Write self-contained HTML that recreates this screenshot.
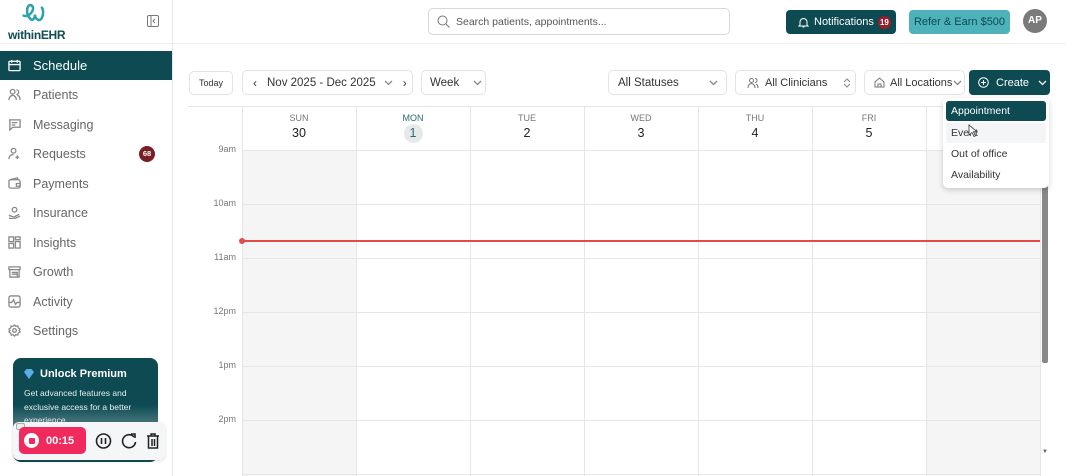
<!DOCTYPE html>
<html><head><meta charset="utf-8"><style>
*{box-sizing:border-box;margin:0;padding:0}
body{width:1066px;height:476px;overflow:hidden;background:#fff;font-family:"Liberation Sans",sans-serif;color:#222;position:relative}
.a{position:absolute}
.nav{position:absolute;left:0;width:172px;height:29px;display:flex;align-items:center;font-size:12.5px;color:#666}
.nav svg{margin:0 12px 0 8px;width:13px;height:13px;stroke:#888;fill:none;stroke-width:1.4}
.box{position:absolute;border:1px solid #e3e3e3;border-radius:5px;background:#fff;font-size:11.5px;color:#333;display:flex;align-items:center;white-space:nowrap}
.chev{width:9px;height:9px;stroke:#888;fill:none;stroke-width:1.3;flex:none}
.dh{position:absolute;top:107px;width:114px;text-align:center}
.dh .d{font-size:9px;color:#777;margin-top:6px}
.dh .n{font-size:12.5px;color:#222;margin-top:3px}
.vl{position:absolute;top:107px;height:369px;width:1px;background:#e6e6e6}
.hl{position:absolute;left:242px;width:798px;height:1px;background:#e6e6e6}
.tl{position:absolute;left:188px;width:48px;text-align:right;font-size:9px;color:#777}
.mi{position:absolute;left:946px;width:100px;height:20px;font-size:10.5px;padding-left:5px;line-height:20px;color:#333}
</style></head><body>
<div class="a" style="left:172px;top:0;width:1px;height:476px;background:#e8e8e8"></div>
<svg class="a" style="left:20px;top:2px" width="30" height="25" viewBox="0 0 26 22"><path d="M3 12 C8 14 14 6 10 3 C6 1 4 10 9 15 C11 17 13 14 13 11 C13 15 17 18 19 14 C21 10 20 6 19 5" stroke="#2aa3ab" stroke-width="2.2" fill="none" stroke-linecap="round"/></svg>
<div class="a" style="left:8px;top:28px;font-size:12px;font-weight:bold;color:#0f4c55;letter-spacing:-0.3px">withinEHR</div>
<svg class="a" style="left:147px;top:15px" width="12" height="12" viewBox="0 0 12 12"><rect x="0.5" y="0.5" width="11" height="11" rx="1.5" stroke="#777" fill="none"/><path d="M4 1v10M8 4l-2 2 2 2" stroke="#777" fill="none"/></svg>
<div class="a" style="left:0;top:43px;width:172px;height:1px;background:#eee"></div>
<div class="nav" style="top:51px;background:#0d4a52;color:#fff;font-size:13px"><svg viewBox="0 0 14 14" style="stroke:#fff"><rect x="1" y="2.5" width="12" height="10" rx="1"/><path d="M1 6h12M4 1v3M10 1v3"/></svg>Schedule</div>
<div class="nav" style="top:80px"><svg viewBox="0 0 14 14"><circle cx="5" cy="4" r="2.5"/><path d="M1 13c0-3 2-5 4-5s4 2 4 5M9 2a2.5 2.5 0 010 5M10 8c2 0 3 2 3 5"/></svg>Patients</div>
<div class="nav" style="top:110px"><svg viewBox="0 0 14 14"><path d="M1 2h12v8H5l-3 3V2zM4 5h6M4 7.5h4"/></svg>Messaging</div>
<div class="nav" style="top:139px"><svg viewBox="0 0 14 14"><circle cx="6" cy="4" r="2.5"/><path d="M1 13c0-3 2-5 5-5M10 9v4M8 11h4"/></svg>Requests<span class="a" style="left:139px;top:7px;width:16px;height:16px;border-radius:8px;background:#7b1d24;color:#fff;font-size:7.5px;text-align:center;line-height:16px;font-weight:bold">68</span></div>
<div class="nav" style="top:169px"><svg viewBox="0 0 14 14"><rect x="1" y="3" width="12" height="9" rx="2"/><path d="M2 3l8-2 1 2M9 7h4v3H9z"/></svg>Payments</div>
<div class="nav" style="top:198px"><svg viewBox="0 0 14 14"><circle cx="7" cy="4" r="2.5"/><path d="M1 10l5 2 6-3M1 13l5 1 7-3"/></svg>Insurance</div>
<div class="nav" style="top:228px"><svg viewBox="0 0 14 14"><rect x="1" y="1" width="5" height="5"/><rect x="8" y="1" width="5" height="3"/><rect x="1" y="8" width="5" height="5"/><rect x="8" y="6" width="5" height="7"/></svg>Insights</div>
<div class="nav" style="top:257px"><svg viewBox="0 0 14 14"><path d="M1 2h12v3H1zM2 5v8h10V5M4 8h6v5M4 10h6"/></svg>Growth</div>
<div class="nav" style="top:287px"><svg viewBox="0 0 14 14"><rect x="1" y="1" width="12" height="12" rx="2"/><path d="M1 8h3l2-3 2 5 2-2h3"/></svg>Activity</div>
<div class="nav" style="top:316px"><svg viewBox="0 0 14 14"><circle cx="7" cy="7" r="2"/><path d="M7 1l1.5 1.5 2-.5.5 2L13 5.5 12 7l1 1.5-2 1.5-.5 2-2-.5L7 13l-1.5-1.5-2 .5-.5-2L1 8.5 2 7 1 5.5 3 4l.5-2 2 .5z"/></svg>Settings</div>
<div class="a" style="left:13px;top:358px;width:145px;height:104px;border-radius:8px;background:linear-gradient(#0d4a52 0%,#0d4a52 45%,#6f9499 75%,#0d4a52 100%)"></div>
<div class="a" style="left:24px;top:369px;width:10px;height:10px;background:#5aaee8;clip-path:polygon(0 30%,25% 0,75% 0,100% 30%,50% 100%)"></div>
<div class="a" style="left:40px;top:368px;font-size:11px;color:#fff;font-weight:bold">Unlock Premium</div>
<div class="a" style="left:24px;top:387px;width:128px;font-size:8.5px;line-height:13.5px;color:#e5eeee">Get advanced features and exclusive access for a better experience.</div>
<div class="a" style="left:13px;top:422px;width:152px;height:38px;background:#f4f6f8;border-radius:6px;box-shadow:0 1px 3px rgba(0,0,0,.15)"></div>
<div class="a" style="left:16px;top:423px;width:9px;height:7px;border:1px solid #aaa;border-radius:2px;background:#eee"></div>
<div class="a" style="left:19px;top:427px;width:67px;height:27px;border-radius:5px;background:#f02a5c"></div>
<div class="a" style="left:24px;top:433px;width:15px;height:15px;border-radius:50%;background:#fff"></div>
<div class="a" style="left:29px;top:438px;width:6px;height:6px;border-radius:1px;background:#f02a5c"></div>
<div class="a" style="left:46px;top:435px;font-size:11px;font-weight:bold;color:#fff">00:15</div>
<svg class="a" style="left:95px;top:432px" width="68" height="18" viewBox="0 0 68 18"><circle cx="8.5" cy="9" r="7" stroke="#222" stroke-width="1.6" fill="none"/><path d="M6.5 6v6M10.5 6v6" stroke="#222" stroke-width="1.6"/><path d="M39 5a6.5 6.5 0 1 0 1.5 5" stroke="#222" stroke-width="1.6" fill="none"/><path d="M36 2h4v4" stroke="#222" stroke-width="1.6" fill="none"/><path d="M52 4h12M56 4V2h4v2M53.5 4v12h9V4M57 7v7M59.5 7v7" stroke="#222" stroke-width="1.5" fill="none"/></svg>
<div class="a" style="left:173px;top:43px;width:893px;height:1px;background:#eee"></div>
<div class="box" style="left:428px;top:8px;width:302px;height:27px;border-color:#d8d8d8"><svg style="margin:0 6px 0 8px" width="13" height="13" viewBox="0 0 13 13"><circle cx="5.5" cy="5.5" r="4.5" stroke="#777" fill="none"/><path d="M9 9l3.5 3.5" stroke="#777"/></svg><span style="font-size:10.5px;color:#555">Search patients, appointments...</span></div>
<div class="a" style="left:786px;top:10px;width:110px;height:24px;border-radius:4px;background:#0d4a52;color:#fff;font-size:11px;display:flex;align-items:center;white-space:nowrap"><svg style="margin:0 5px 0 12px" width="11" height="11" viewBox="0 0 11 11"><path d="M2 8V5a3.5 3.5 0 017 0v3l1 1H1zM4.5 10h2" stroke="#fff" fill="none"/></svg>Notifications<span style="margin-left:4px;width:13px;height:13px;border-radius:7px;background:#9b1c2a;font-size:8px;text-align:center;line-height:13px;font-weight:bold">19</span></div>
<div class="a" style="left:909px;top:10px;width:101px;height:24px;border-radius:4px;background:#4eb2ba;color:#0d4a52;font-size:11px;text-align:center;line-height:24px;white-space:nowrap">Refer &amp; Earn $500</div>
<div class="a" style="left:1023px;top:9px;width:24px;height:24px;border-radius:12px;background:#7a7a7a;color:#fff;font-size:10px;font-weight:bold;text-align:center;line-height:24px">AP</div>
<div class="box" style="left:189px;top:71px;width:44px;height:24px;justify-content:center;font-size:9px">Today</div>
<div class="box" style="left:242px;top:70px;width:171px;height:25px"><span style="margin-left:10px;font-size:12px">‹</span><span style="margin-left:10px">Nov 2025 - Dec 2025</span><svg class="chev" style="margin-left:8px" viewBox="0 0 9 9"><path d="M1 3l3.5 3.5L8 3"/></svg><span style="margin-left:10px;font-size:12px">›</span></div>
<div class="box" style="left:421px;top:70px;width:65px;height:25px"><span style="margin-left:8px">Week</span><svg class="chev" style="margin-left:14px" viewBox="0 0 9 9"><path d="M1 3l3.5 3.5L8 3"/></svg></div>
<div class="box" style="left:608px;top:70px;width:119px;height:25px"><span style="margin-left:9px">All Statuses</span><svg class="chev" style="margin-left:30px" viewBox="0 0 9 9"><path d="M1 3l3.5 3.5L8 3"/></svg></div>
<div class="box" style="left:735px;top:70px;width:121px;height:25px;font-size:11px"><svg style="margin:0 6px 0 11px;flex:none" width="12" height="12" viewBox="0 0 12 12"><circle cx="4.5" cy="3.5" r="2" stroke="#777" fill="none"/><path d="M1 11c0-3 2-4.5 3.5-4.5S8 8 8 11M8 1.5a2 2 0 010 4M9 7c1.5.5 2 2 2 4" stroke="#777" fill="none"/></svg>All Clinicians<svg style="margin-left:16px;flex:none" width="8" height="10" viewBox="0 0 8 10"><path d="M1 4l3-3 3 3M1 6l3 3 3-3" stroke="#888" fill="none"/></svg></div>
<div class="box" style="left:864px;top:70px;width:101px;height:25px;font-size:11px"><svg style="margin:0 5px 0 9px;flex:none" width="11" height="11" viewBox="0 0 11 11"><path d="M1 5L5.5 1 10 5v5H1zM4 10V7h3v3" stroke="#777" fill="none"/></svg>All Locations<svg class="chev" style="margin-left:1px" viewBox="0 0 9 9"><path d="M1 3l3.5 3.5L8 3"/></svg></div>
<div class="a" style="left:969px;top:70px;width:81px;height:25px;border-radius:4px;background:#0d4a52;color:#fff;font-size:11px;display:flex;align-items:center"><svg style="margin:0 7px 0 9px" width="11" height="11" viewBox="0 0 11 11"><circle cx="5.5" cy="5.5" r="4.8" stroke="#fff" fill="none"/><path d="M5.5 3v5M3 5.5h5" stroke="#fff"/></svg>Create<svg class="chev" style="margin-left:9px;stroke:#fff" viewBox="0 0 9 9"><path d="M1 3l3.5 3.5L8 3"/></svg></div>
<div class="a" style="left:188px;top:106px;width:852px;height:1px;background:#e6e6e6"></div>
<div class="a" style="left:242px;top:150px;width:114px;height:326px;background:#f5f5f6"></div>
<div class="a" style="left:926px;top:150px;width:114px;height:326px;background:#f5f5f6"></div>
<div class="vl" style="left:242px"></div><div class="vl" style="left:356px"></div><div class="vl" style="left:470px"></div><div class="vl" style="left:584px"></div><div class="vl" style="left:698px"></div><div class="vl" style="left:812px"></div><div class="vl" style="left:926px"></div><div class="vl" style="left:1040px"></div>
<div class="hl" style="top:150px"></div><div class="hl" style="top:204px"></div><div class="hl" style="top:258px"></div><div class="hl" style="top:312px"></div><div class="hl" style="top:366px"></div><div class="hl" style="top:420px"></div><div class="hl" style="top:474px"></div>
<div class="tl" style="top:144px">9am</div><div class="tl" style="top:198px">10am</div><div class="tl" style="top:252px">11am</div><div class="tl" style="top:306px">12pm</div><div class="tl" style="top:360px">1pm</div><div class="tl" style="top:414px">2pm</div>
<div class="dh" style="left:242px"><div class="d">SUN</div><div class="n">30</div></div>
<div class="dh" style="left:356px"><div class="d" style="color:#2a6a72">MON</div><div class="n"><span style="display:inline-block;width:19px;height:19px;border-radius:10px;background:#e6e9ea;line-height:19px;color:#2a6a72;margin-top:-2px">1</span></div></div>
<div class="dh" style="left:470px"><div class="d">TUE</div><div class="n">2</div></div>
<div class="dh" style="left:584px"><div class="d">WED</div><div class="n">3</div></div>
<div class="dh" style="left:698px"><div class="d">THU</div><div class="n">4</div></div>
<div class="dh" style="left:812px"><div class="d">FRI</div><div class="n">5</div></div>
<div class="a" style="left:242px;top:240px;width:798px;height:1.5px;background:#e24b4b"></div>
<div class="a" style="left:239px;top:238px;width:6px;height:6px;border-radius:3px;background:#e24b4b"></div>
<div class="a" style="left:1042px;top:150px;width:6px;height:213px;background:#888;border-radius:2px"></div>
<div class="a" style="left:1042px;top:449px;font-size:6px;color:#666">▼</div>
<div class="a" style="left:943px;top:98px;width:106px;height:90px;background:#fff;border-radius:5px;box-shadow:0 2px 6px rgba(0,0,0,.18)"></div>
<div class="mi" style="top:101px;background:#0d4a52;color:#fff;border-radius:3px">Appointment</div>
<div class="mi" style="top:123px;background:#f4f5f6">Event</div>
<div class="mi" style="top:144px">Out of office</div>
<div class="mi" style="top:165px">Availability</div>
<svg class="a" style="left:968px;top:124px" width="10" height="14" viewBox="0 0 10 14"><path d="M1 1v10l3-2.5 2 4 1.5-.7-2-4H9z" fill="#fff" stroke="#333" stroke-width="0.8"/></svg>
</body></html>
